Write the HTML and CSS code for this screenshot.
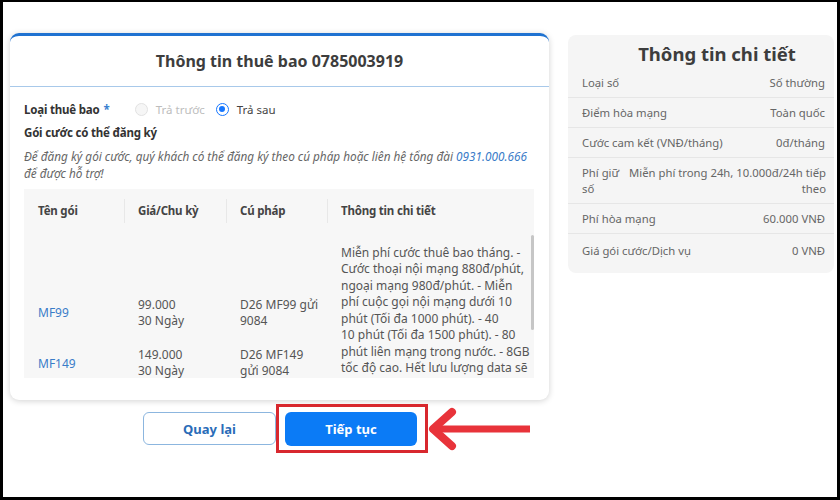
FILE: index.html
```html
<!DOCTYPE html>
<html lang="vi">
<head>
<meta charset="utf-8">
<link rel="stylesheet" href="styles.css">
</head>
<body>
<div class="frame">
  <div class="left">
    <div class="card">
      <div class="card-head">Thông tin thuê bao 0785003919</div>
      <div class="card-body">
        <div class="type-row">
          <span class="label">Loại thuê bao</span><span class="star">*</span>
          <span class="radio disabled"></span><span class="opt disabled-text">Trả trước</span>
          <span class="radio checked"></span><span class="opt">Trả sau</span>
        </div>
        <div class="pkg-title">Gói cước có thể đăng ký</div>
        <div class="note">Để đăng ký gói cước, quý khách có thể đăng ký theo cú pháp hoặc liên hệ tổng đài <span class="phone">0931.000.666</span><br>để được hỗ trợ!</div>
        <div class="table">
          <div class="thead">
            <div class="th">Tên gói</div>
            <div class="th sep">Giá/Chu kỳ</div>
            <div class="th sep">Cú pháp</div>
            <div class="th sep">Thông tin chi tiết</div>
          </div>
          <div class="tbody">
            <div class="td r1 name">MF99</div>
            <div class="td r1 two">99.000<br>30 Ngày</div>
            <div class="td r1 two">D26 MF99 gửi<br>9084</div>
            <div class="td detail">Miễn phí cước thuê bao tháng. -<br>Cước thoại nội mạng 880đ/phút,<br>ngoại mạng 980đ/phút. - Miễn<br>phí cuộc gọi nội mạng dưới 10<br>phút (Tối đa 1000 phút). - 40<br>10 phút (Tối đa 1500 phút). - 80<br>phút liên mạng trong nước. - 8GB<br>tốc độ cao. Hết lưu lượng data sẽ</div>
            <div class="td r2 name">MF149</div>
            <div class="td r2 two">149.000<br>30 Ngày</div>
            <div class="td r2 two">D26 MF149<br>gửi 9084</div>
          </div>
          <div class="scrollbar"></div>
        </div>
      </div>
    </div>
    <div class="actions">
      <button class="btn back">Quay lại</button>
      <div class="highlight"><button class="btn next">Tiếp tục</button></div>
      <svg class="arrow" width="104" height="46" viewBox="0 0 104 46">
        <line x1="9" y1="23" x2="102" y2="23" stroke="#e8333a" stroke-width="7"/>
        <polyline points="24,6 5,23 24,40" fill="none" stroke="#e8333a" stroke-width="8" stroke-linecap="round" stroke-linejoin="round"/>
      </svg>
    </div>
  </div>
  <div class="panel">
    <div class="panel-title">Thông tin chi tiết</div>
    <div class="prow"><span>Loại số</span><span class="val">Số thường</span></div>
    <div class="prow"><span>Điểm hòa mạng</span><span class="val">Toàn quốc</span></div>
    <div class="prow"><span>Cước cam kết (VNĐ/tháng)</span><span class="val">0đ/tháng</span></div>
    <div class="prow tight"><span class="narrow">Phí giữ số</span><span class="val">Miễn phí trong 24h, 10.000đ/24h tiếp theo</span></div>
    <div class="prow"><span>Phí hòa mạng</span><span class="val">60.000 VNĐ</span></div>
    <div class="prow last"><span>Giá gói cước/Dịch vụ</span><span class="val">0 VNĐ</span></div>
  </div>
</div>
</body>
</html>
```
FILE: styles.css
```css
* { box-sizing: border-box; }
html, body { margin: 0; padding: 0; background: #fff; }
body { font-family: "Noto Sans", "Open Sans", sans-serif; color: #555; }

.frame {
  width: 840px;
  height: 500px;
  border: 3px solid #000;
  border-top-width: 2px;
  display: flex;
  align-items: flex-start;
  padding: 31px 0 0 7px;
  background: #fff;
}

.left { width: 539px; flex: none; }

.card {
  height: 367px;
  border-top: 3px solid #1f72d1;
  border-radius: 9px;
  box-shadow: 0 1px 6px rgba(0, 0, 0, 0.18);
  background: #fff;
  overflow: hidden;
}

.card-head {
  height: 51px;
  display: flex;
  align-items: center;
  justify-content: center;
  border-bottom: 1px solid #a8c9ea;
  font-size: 16px;
  font-weight: 700;
  color: #3d3d3d;
}

.card-body { padding: 13px 14px 0; }

.type-row {
  display: flex;
  align-items: center;
  height: 18px;
  font-size: 11.5px;
}
.label { font-weight: 700; color: #333; font-size: 11.5px; letter-spacing: -0.2px; }
.star { color: #3b7fd0; margin-left: 4px; font-weight: 700; }
.radio {
  width: 13px;
  height: 13px;
  border-radius: 50%;
  flex: none;
  display: flex;
  align-items: center;
  justify-content: center;
}
.radio.disabled { border: 1px solid #e2e2e2; background: #f6f6f6; margin-left: 25px; }
.radio.checked { border: 1px solid #1677ff; margin-left: 11px; }
.radio.checked::after {
  content: "";
  width: 6px;
  height: 6px;
  border-radius: 50%;
  background: #1677ff;
}
.opt { margin-left: 8px; color: #444; }
.disabled-text { color: #bdbdbd; }

.pkg-title {
  margin-top: 6px;
  line-height: 18px;
  font-size: 11.5px;
  letter-spacing: -0.2px;
  font-weight: 700;
  color: #333;
}

.note {
  margin-top: 6px;
  font-size: 11.77px;
  line-height: 17px;
  font-style: italic;
  color: #666;
  white-space: nowrap;
}
.phone { color: #3a7cc8; }

.table {
  margin-top: 7px;
  width: 510px;
  height: 189px;
  background: #f7f7f7;
  position: relative;
  font-size: 12px;
  color: #555;
}

.thead {
  display: grid;
  grid-template-columns: 100px 102px 101px 207px;
  height: 43px;
}
.th {
  display: flex;
  align-items: center;
  padding-left: 14px;
  font-weight: 700;
  font-size: 11.5px;
  letter-spacing: -0.2px;
  color: #444;
}
.th.sep {
  background: linear-gradient(#e8e8e8, #e8e8e8) left center / 1px 24px no-repeat;
}

.tbody {
  display: grid;
  grid-template-columns: 100px 102px 101px 207px;
  grid-template-rows: 106px 40px;
  height: 146px;
  overflow: hidden;
  line-height: 16.5px;
}
.td { padding-left: 14px; }
.r1 { align-self: end; }
.r1.name { padding-bottom: 17px; }
.r1.two { padding-bottom: 8.5px; }
.r2 { align-self: start; }
.r2.name { padding-top: 17.5px; }
.r2.two { padding-top: 8.5px; }
.name { color: #3a7cc8; }
.detail {
  grid-column: 4;
  grid-row: 1 / span 2;
  padding-top: 12.5px;
  white-space: nowrap;
}

.scrollbar {
  position: absolute;
  right: 0;
  top: 46px;
  width: 3px;
  height: 95px;
  background: #c6c6c6;
  border-radius: 2px;
}

.actions {
  display: flex;
  align-items: center;
  margin-top: 4px;
  padding-left: 133px;
}
.btn {
  font-family: "Noto Sans", "Open Sans", sans-serif;
  font-size: 13px;
  font-weight: 700;
  border-radius: 6px;
  cursor: pointer;
}
.back {
  width: 133px;
  height: 33px;
  background: #fff;
  border: 1px solid #8cb6df;
  color: #2a6cb8;
}
.highlight {
  border: 3px solid #d8282e;
  padding: 5px 8px 4px 6px;
  display: flex;
}
.next {
  width: 132px;
  height: 34px;
  border: none;
  background: #0b7bf6;
  color: #fff;
}
.arrow { display: block; flex: none; }

.panel {
  margin-left: 19px;
  margin-top: 2px;
  width: 266px;
  height: 238px;
  background: #f5f5f5;
  border-radius: 8px;
  padding: 0 9px 0 14px;
  font-size: 11.3px;
  color: #666;
}
.panel-title {
  padding: 7px 0 2px 27px;
  line-height: 24px;
  text-align: center;
  font-size: 18.5px;
  font-weight: 700;
  color: #3d3d3d;
}
.prow {
  display: flex;
  justify-content: space-between;
  gap: 8px;
  padding: 6.5px 9px 6.5px 14px;
  line-height: 16px;
  border-bottom: 1px solid #e6e6e6;
  margin: 0 -9px 0 -14px;
}
.prow.tight { gap: 3px; padding-right: 8px; }
.prow.last { border-bottom: none; padding-top: 9px; }
.val { text-align: right; }
.narrow { width: 38px; flex: none; }
```
